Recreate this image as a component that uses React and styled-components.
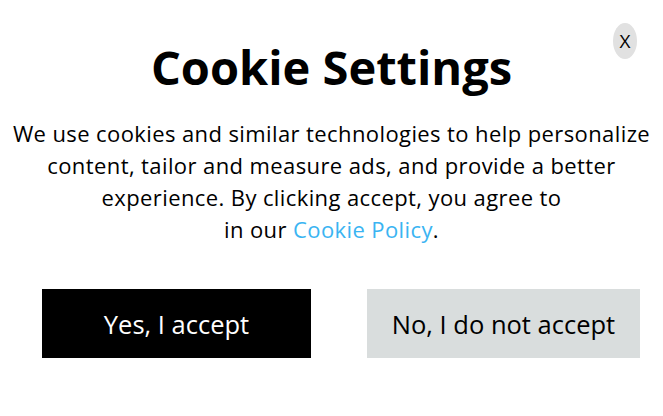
import React from 'react';
import styled, { createGlobalStyle } from 'styled-components';

const GlobalStyle = createGlobalStyle`
  html, body {
    margin: 0;
    padding: 0;
    background: #fff;
  }
  body {
    font-family: "Open Sans", "Liberation Sans", sans-serif;
    color: #000;
  }
`;

const Dialog = styled.div`
  position: relative;
  width: 663px;
  height: 416px;
  box-sizing: border-box;
  padding-top: 35px;
`;

const CloseButton = styled.button`
  position: absolute;
  top: 23px;
  left: 613px;
  width: 24px;
  height: 36px;
  border: none;
  border-radius: 50%;
  background: #e1e1e1;
  color: #000;
  font-family: "Open Sans", sans-serif;
  font-size: 19px;
  line-height: 36px;
  padding: 0;
  cursor: pointer;
`;

const Title = styled.h1`
  margin: 0;
  text-align: center;
  font-size: 47px;
  font-weight: 700;
  line-height: 64px;
`;

const Body = styled.p`
  margin: 18px 0 0;
  text-align: center;
  font-size: 22px;
  letter-spacing: 0.4px;
  line-height: 32px;
`;

const PolicyLink = styled.a`
  color: #3ab4f2;
  text-decoration: none;
`;

const Actions = styled.div`
  display: grid;
  grid-template-columns: 269px 273px;
  justify-content: space-between;
  padding: 0 23px 0 42px;
  margin-top: 44px;
`;

const ActionButton = styled.button`
  height: 69px;
  border: none;
  font-family: "Open Sans", sans-serif;
  font-size: 25.5px;
  background: ${(p) => (p.$primary ? '#000' : '#d9dddd')};
  color: ${(p) => (p.$primary ? '#fff' : '#000')};
  cursor: pointer;
`;

export default function App() {
  return (
    <>
      <GlobalStyle />
      <Dialog>
        <CloseButton>X</CloseButton>
        <Title>Cookie Settings</Title>
        <Body>
          We use cookies and similar technologies to help personalize
          <br />
          content, tailor and measure ads, and provide a better
          <br />
          experience. By clicking accept, you agree to
          <br />
          in our <PolicyLink href="#">Cookie Policy</PolicyLink>.
        </Body>
        <Actions>
          <ActionButton $primary>Yes, I accept</ActionButton>
          <ActionButton>No, I do not accept</ActionButton>
        </Actions>
      </Dialog>
    </>
  );
}
